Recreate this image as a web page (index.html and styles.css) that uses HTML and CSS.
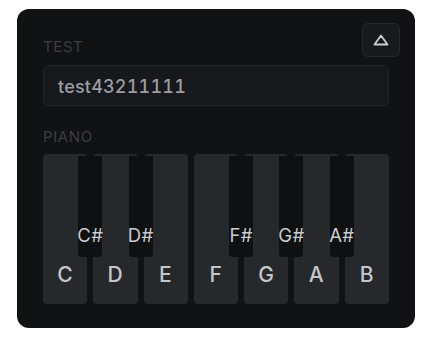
FILE: index.html
```html
<!DOCTYPE html>
<html>
<head>
<meta charset="utf-8">
<link rel="stylesheet" href="styles.css">
</head>
<body>
<div class="card">
  <button class="toggle" aria-label="collapse">
    <svg width="16" height="12" viewBox="0 0 16 12"><path d="M8 1.5 L14.5 10.5 H1.5 Z" fill="none" stroke="#c9cbd0" stroke-width="1.8" stroke-linejoin="round"/></svg>
  </button>
  <div class="label">TEST</div>
  <div class="input">test43211111</div>
  <div class="label piano-label">PIANO</div>
  <div class="piano">
    <div class="white">C</div>
    <div class="white">D</div>
    <div class="white">E</div>
    <div class="white">F</div>
    <div class="white">G</div>
    <div class="white">A</div>
    <div class="white">B</div>
    <div class="black k1">C#</div>
    <div class="black k2">D#</div>
    <div class="black k4">F#</div>
    <div class="black k5">G#</div>
    <div class="black k6">A#</div>
  </div>
</div>
</body>
</html>
```
FILE: styles.css
```css
html, body { margin: 0; padding: 0; background: #ffffff; }
body { font-family: Inter, "Noto Sans", sans-serif; }
.card {
  position: relative;
  margin: 9px 0 0 17px;
  width: 398px;
  height: 319px;
  box-sizing: border-box;
  padding: 30px 26px 0;
  background: #111214;
  border-radius: 12px;
}
.toggle {
  position: absolute;
  top: 14px;
  right: 15px;
  width: 38px;
  height: 34px;
  padding: 0;
  background: #18191c;
  border: 1px solid #24262a;
  border-radius: 6px;
  display: flex;
  align-items: center;
  justify-content: center;
}
.toggle svg { display: block; margin-top: -1px; }
.label {
  font-size: 15px;
  line-height: 16px;
  color: #3b3d42;
  letter-spacing: 0.6px;
}
.input {
  margin-top: 10px;
  height: 41px;
  box-sizing: border-box;
  background: #17181b;
  border: 1px solid #222428;
  border-radius: 6px;
  padding: 2px 0 0 14px;
  display: flex;
  align-items: center;
  font-size: 18px;
  font-weight: 500;
  color: #9a9da3;
  letter-spacing: 0.2px;
  font-variant-numeric: tabular-nums;
}
.piano-label { margin-top: 23px; }
.piano {
  position: relative;
  margin-top: 9px;
  height: 150px;
  display: grid;
  grid-template-columns: repeat(7, 1fr);
  gap: 6px;
}
.white {
  background: #26282b;
  border-radius: 4px;
  display: flex;
  align-items: flex-end;
  justify-content: center;
  padding-bottom: 17px;
  box-sizing: border-box;
  font-size: 21px;
  font-weight: 500;
  color: #c3c6cc;
  line-height: 24px;
  letter-spacing: 0.5px;
}
.black {
  position: absolute;
  top: 2px;
  width: 24px;
  height: 101px;
  background: #0f1012;
  border-radius: 0 0 4px 4px;
  display: flex;
  align-items: flex-end;
  justify-content: center;
  padding-bottom: 12px;
  box-sizing: border-box;
  font-size: 18.5px;
  color: #c8cbd1;
  line-height: 20px;
  letter-spacing: 0.3px;
  white-space: nowrap;
}
.k1 { left: calc((100% + 6px) * 1 / 7 - 15px); }
.k2 { left: calc((100% + 6px) * 2 / 7 - 15px); }
.k4 { left: calc((100% + 6px) * 4 / 7 - 15px); }
.k5 { left: calc((100% + 6px) * 5 / 7 - 15px); }
.k6 { left: calc((100% + 6px) * 6 / 7 - 15px); }
```
